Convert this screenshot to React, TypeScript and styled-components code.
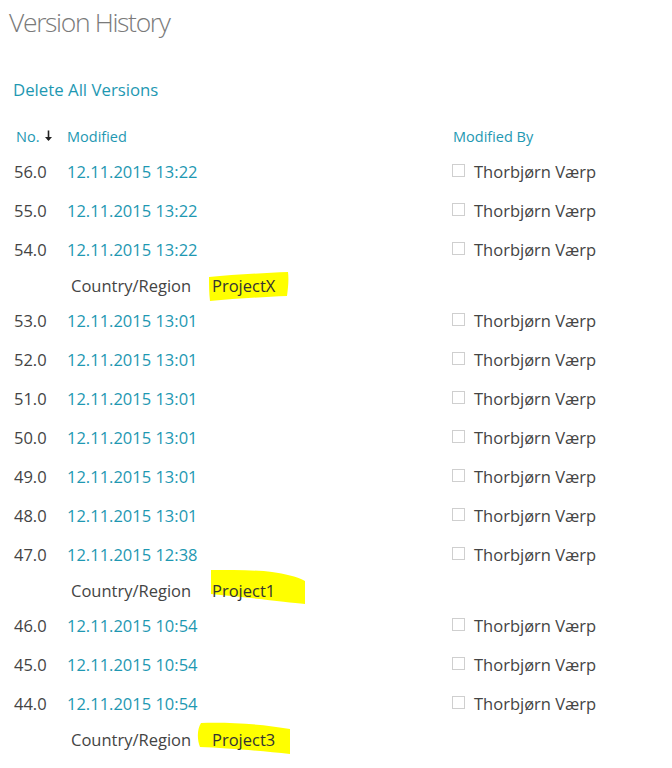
import styled, { createGlobalStyle } from 'styled-components';

const GlobalStyle = createGlobalStyle`
  html, body {
    margin: 0;
    padding: 0;
    background: #ffffff;
  }
  body {
    font-family: 'Open Sans', 'Noto Sans', 'Liberation Sans', sans-serif;
    color: #444444;
  }
`;

const LINK = '#1e98b2';

const Page = styled.div`
  width: 672px;
  min-height: 768px;
  overflow: hidden;
`;

const Title = styled.h1`
  margin: 0;
  padding: 2px 0 0 9px;
  font-size: 26.5px;
  font-weight: 300;
  line-height: 40px;
  color: #7a7a7a;
  letter-spacing: -1.35px;
`;

const DeleteLink = styled.a`
  display: block;
  margin: 36px 0 0 13px;
  font-size: 16.8px;
  line-height: 24px;
  color: ${LINK};
  text-decoration: none;
  cursor: pointer;
`;

const HeaderRow = styled.div`
  display: grid;
  grid-template-columns: 51px 386px auto;
  margin-top: 22px;
  padding-left: 16px;
  height: 24px;
  align-items: center;
  font-size: 14.5px;
  color: ${LINK};
`;

const HeaderCell = styled.div`
  display: flex;
  align-items: center;
  gap: 5px;
`;

const List = styled.div`
  margin-top: 4px;
`;

const Row = styled.div`
  display: grid;
  grid-template-columns: 53px 385px auto;
  padding-left: 14px;
  height: 39px;
  align-items: center;
  font-size: 16.5px;
`;

const Num = styled.div`
  color: #444444;
`;

const DateLink = styled.a`
  color: ${LINK};
  text-decoration: none;
  cursor: pointer;
`;

const Person = styled.div`
  display: flex;
  align-items: center;
  gap: 9px;
  color: #444444;
`;

const Box = styled.span`
  width: 11px;
  height: 11px;
  border: 1px solid #cfcfcf;
  margin-top: -2px;
`;

const PropRow = styled.div`
  display: flex;
  align-items: center;
  height: 32px;
  padding-left: 71px;
  font-size: 16.5px;
  color: #444444;
`;

const PropLabel = styled.span`
  width: 141px;
`;

const Marked = styled.span`
  position: relative;
  isolation: isolate;
  color: #333333;
`;

const Ink = styled.svg`
  position: absolute;
  left: -20px;
  top: 50%;
  margin-top: -25px;
  width: 130px;
  height: 50px;
  z-index: -1;
  overflow: visible;
`;

type Version = { no: string; date: string; prop?: { value: string; mark: string } };

const versions: Version[] = [
  { no: '56.0', date: '12.11.2015 13:22' },
  { no: '55.0', date: '12.11.2015 13:22' },
  {
    no: '54.0',
    date: '12.11.2015 13:22',
    prop: { value: 'ProjectX', mark: 'M17,17 C40,15 70,13 96,12 C97,20 96,28 95,36 C70,37 42,39 18,41 C17,33 17,25 17,17 Z' },
  },
  { no: '53.0', date: '12.11.2015 13:01' },
  { no: '52.0', date: '12.11.2015 13:01' },
  { no: '51.0', date: '12.11.2015 13:01' },
  { no: '50.0', date: '12.11.2015 13:01' },
  { no: '49.0', date: '12.11.2015 13:01' },
  { no: '48.0', date: '12.11.2015 13:01' },
  {
    no: '47.0',
    date: '12.11.2015 12:38',
    prop: { value: 'Project1', mark: 'M19,5 C40,5 65,5 80,7 C93,9 104,11 113,16 L113,39 C95,37 60,33 19,29 C19,21 19,13 19,5 Z' },
  },
  { no: '46.0', date: '12.11.2015 10:54' },
  { no: '45.0', date: '12.11.2015 10:54' },
  {
    no: '44.0',
    date: '12.11.2015 10:54',
    prop: { value: 'Project3', mark: 'M9,9 C35,8 70,10 98,15 L98,40 C70,37 35,34 8,33 C5,26 5,15 9,9 Z' },
  },
];

const SortArrow = () => (
  <svg width="9" height="12" viewBox="0 0 9 12">
    <path d="M4.5 0.5 V10" stroke="#222" strokeWidth="1.6" />
    <path d="M1 7 L4.5 11 L8 7 Z" fill="#222" />
  </svg>
);

export default function App() {
  return (
    <Page>
      <GlobalStyle />
      <Title>Version History</Title>
      <DeleteLink>Delete All Versions</DeleteLink>
      <HeaderRow>
        <HeaderCell>
          No. <SortArrow />
        </HeaderCell>
        <HeaderCell>Modified</HeaderCell>
        <HeaderCell>Modified By</HeaderCell>
      </HeaderRow>
      <List>
        {versions.map((v) => (
          <div key={v.no}>
            <Row>
              <Num>{v.no}</Num>
              <DateLink>{v.date}</DateLink>
              <Person>
                <Box />
                Thorbjørn Værp
              </Person>
            </Row>
            {v.prop && (
              <PropRow>
                <PropLabel>Country/Region</PropLabel>
                <Marked>
                  <Ink viewBox="0 0 130 50">
                    <path d={v.prop.mark} fill="#ffff00" />
                  </Ink>
                  {v.prop.value}
                </Marked>
              </PropRow>
            )}
          </div>
        ))}
      </List>
    </Page>
  );
}
